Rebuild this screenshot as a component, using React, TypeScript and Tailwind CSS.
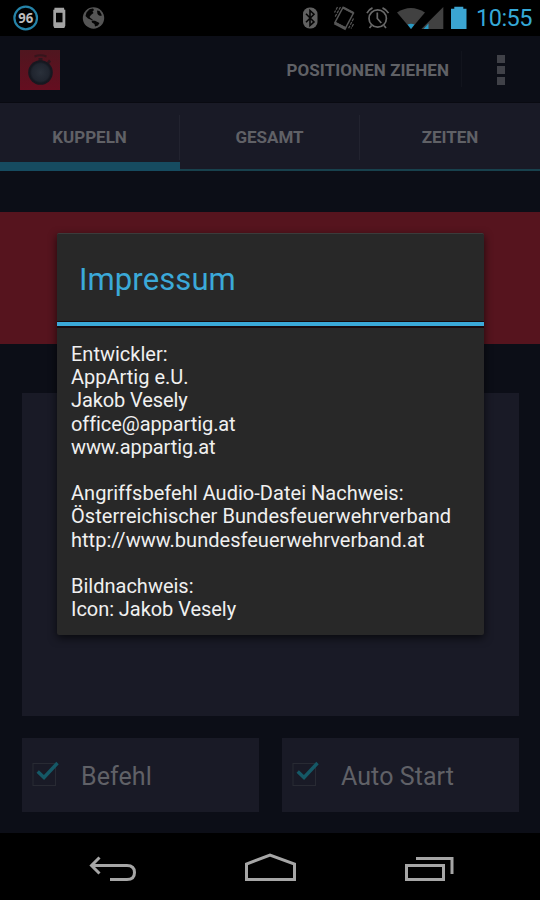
import React from "react";

function NotificationIcons() {
  return (
    <div className="flex h-full w-28 items-center">
      <svg width="112" height="36" viewBox="0 0 112 36" fill="none">
        <circle cx="25.700" cy="18" r="11.300" stroke="#2583a8" strokeWidth="2.200" />
        <text x="18.300" y="22.800" fontFamily="Open Sans" fontWeight="700" fontSize="13.500" textLength="15" lengthAdjust="spacingAndGlyphs" fill="#bdbdbd">96</text>
        <path d="M54.500 7.800h9.500l.3 2h1v16l-1 2.200H54.300l-1-2.200v-16h1z" fill="#a3a3a3" />
        <rect x="56" y="12.800" width="6.500" height="9.500" fill="#030303" />
        <circle cx="93.500" cy="18" r="10.700" fill="#555" />
        <path d="M86.500 12.500l3-3.300 3.500-.7 1 1.500-1.500 1.500 1 1.500-2.500 2-1.500 2 1.500 1.500 2 1-1.500.5-3.500-1.500-2.500-2.500zM91.500 20.500l3.500 .2 4.500 2.300-1.500 2.500-3 1-.5-2.500-2.500-1.500zM97 10.500l2.500.5 2 3.500 0 1.500-2.500-.5-1.500-1.500z" fill="#050505" />
      </svg>
    </div>
  );
}

function SystemIcons() {
  return (
    <svg width="172" height="36" viewBox="300 0 172 36" fill="none">
      <rect x="303" y="7.500" width="14.500" height="21" rx="6.500" fill="#616161" />
      <path d="M306 13.700l8 8.200-4 3.600V10.500l4 3.700-8 8" stroke="#050505" strokeWidth="1.600" />
      <g stroke="#565656" strokeWidth="1.500">
        <path d="M343 7.500L353.500 13L345.500 28L335 22.500z" />
        <path d="M343 7.500L353.500 13" strokeWidth="2.200" />
        <path d="M334.500 23L346 28.800" strokeWidth="3" />
        <path d="M340.500 7l-5.500 10M337.500 7l-3 5.500M353.500 18.500l-5 10M353.500 24l-2.500 4.500" strokeWidth="1.200" strokeDasharray="3 1" />
      </g>
      <g stroke="#686868" strokeWidth="1.700">
        <circle cx="377.700" cy="18.500" r="8.700" />
        <path d="M377.300 12.500v6l4 4.500M367 13.200q1.500-3.500 5.500-5.300M382.500 7.900q4 1.800 6 5.300M371.500 25.500l-2 2.500M384 25.500l2 2.500" />
      </g>
      <path d="M397 12.500Q410.800 3.500 425 12.500L411 29z" fill="#414141" />
      <path d="M407.500 24.600q3.500-1.700 7 0L411 29z" fill="#299ac4" />
      <path d="M443.300 7v22h-22z" fill="#414141" />
      <path d="M428.500 23.500V29H423.500z" fill="#299ac4" />
      <path d="M451 8.800h3.300V6.800h9v2h3.200V29H451z" fill="#3ba5d2" />
    </svg>
  );
}

function AppIcon() {
  return (
    <svg width="40" height="40" viewBox="0 0 40 40">
      <defs>
        <linearGradient id="appRed" x1="0" y1="0" x2="0" y2="1">
          <stop offset="0" stopColor="#4f161f" />
          <stop offset="1" stopColor="#650e20" />
        </linearGradient>
        <radialGradient id="dial">
          <stop offset="0" stopColor="#2a303a" />
          <stop offset="0.800" stopColor="#20252f" />
          <stop offset="1" stopColor="#14171f" />
        </radialGradient>
      </defs>
      <rect width="40" height="40" fill="url(#appRed)" />
      <path d="M14.500 6.500q6-2.500 12 0" stroke="#35151c" strokeWidth="2" fill="none" />
      <path d="M18.500 8h4v4h-4zM27 12l2-2.500 2 2-2 2.500z" fill="#2c161e" />
      <circle cx="20.500" cy="22.500" r="12.300" fill="#171820" />
      <circle cx="20.500" cy="22.500" r="10.800" fill="url(#dial)" />
    </svg>
  );
}

function Tab({ label, active = false, divider = false }: { label: string; active?: boolean; divider?: boolean }) {
  return (
    <div className={`flex flex-1 flex-col ${active ? "border-b-[9px] border-[#164b60]" : "border-b-2 border-[#18414d]"}`}>
      <div className={`mt-3 flex h-[45px] shrink-0 items-center justify-center text-[17px] font-bold text-[#606166] ${divider ? "border-r border-[#22232f]" : ""}`}>
        <span className="mt-px">{label}</span>
      </div>
    </div>
  );
}

function CheckCard({ label }: { label: string }) {
  return (
    <div className="flex h-[74px] flex-1 items-center bg-[#191a26] pl-[10px]">
      <svg width="30" height="30" viewBox="0 0 30 30" fill="none">
        <rect x="1" y="3.500" width="22.500" height="22" stroke="#282a33" />
        <path d="M5.700 11.500l6.300 6L25.500 3" stroke="#155866" strokeWidth="3.400" />
      </svg>
      <span className="ml-[19px] mt-[3px] text-[25px] tracking-[0.08px] text-[#606167]">{label}</span>
    </div>
  );
}

const imprint = [
  { text: "Entwickler:", tracking: "tracking-normal" },
  { text: "AppArtig e.U.", tracking: "tracking-normal" },
  { text: "Jakob Vesely", tracking: "tracking-[-0.1px]" },
  { text: "office@appartig.at", tracking: "tracking-[-0.08px]" },
  { text: "www.appartig.at", tracking: "tracking-[-0.1px]" },
  { text: "", tracking: "tracking-normal" },
  { text: "Angriffsbefehl Audio-Datei Nachweis:", tracking: "tracking-[0.03px]" },
  { text: "Österreichischer Bundesfeuerwehrverband", tracking: "tracking-[0.05px]" },
  { text: "http://www.bundesfeuerwehrverband.at", tracking: "tracking-[0.02px]" },
  { text: "", tracking: "tracking-normal" },
  { text: "Bildnachweis:", tracking: "tracking-normal" },
  { text: "Icon: Jakob Vesely", tracking: "tracking-[-0.05px]" },
];

export default function App() {
  return (
    <div className="relative flex h-[900px] w-[540px] flex-col overflow-hidden bg-[#0c0e17] font-['Roboto',sans-serif]">
      <header className="flex h-9 shrink-0 items-center bg-black">
        <NotificationIcons />
        <div className="ml-auto flex items-center">
          <SystemIcons />
          <span className="mt-[2px] w-[68px] pl-[4px] text-[23.500px] leading-none tracking-[-0.5px] text-[#35a8d7]">10:55</span>
        </div>
      </header>

      <div className="flex h-[67px] shrink-0 items-center border-b border-[#090a11] bg-[#0c0e17]">
        <div className="ml-[20px] mt-px">
          <AppIcon />
        </div>
        <div className="ml-auto flex h-9 items-center border-r border-[#12141d] pr-3 pt-[3px] text-[17px] font-bold tracking-[0.07px] text-[#606166]">
          POSITIONEN ZIEHEN
        </div>
        <div className="ml-[35px] mr-[35px] mt-[2px] flex flex-col gap-[3px]">
          <i className="h-2 w-2 bg-[#404148]" />
          <i className="h-2 w-2 bg-[#404148]" />
          <i className="h-2 w-2 bg-[#404148]" />
        </div>
      </div>

      <nav className="flex h-[68px] shrink-0 bg-[#191a26]">
        <Tab label="KUPPELN" active divider />
        <Tab label="GESAMT" divider />
        <Tab label="ZEITEN" />
      </nav>

      <main className="flex flex-1 flex-col">
        <div className="mt-[41px] h-[132px] bg-[#56141e]" />
        <div className="ml-[22px] mr-[21px] mt-[49px] h-[323px] bg-[#191a26]" />
        <div className="ml-[22px] mr-[21px] mt-[22px] flex gap-[23px]">
          <CheckCard label="Befehl" />
          <CheckCard label="Auto Start" />
        </div>
      </main>

      <footer className="h-[67px] shrink-0 bg-black">
        <svg width="540" height="67" viewBox="0 833 540 67" fill="none" stroke="#a6a6a6" strokeWidth="3">
          <path d="M99.500 857.500L91.500 865.500 99.500 873.500M91.500 865.500H127q7.500 0 7.500 7t-7.500 7h-17" />
          <path d="M246.500 879.500V864L270 855l24.500 9v15.500z" />
          <path d="M406.500 865.500h37v14h-37zM416 858.500h36V874" />
        </svg>
      </footer>

      <section className="absolute left-[57px] top-[233px] flex h-[402px] w-[427px] flex-col rounded-[2px] border-t border-[#3b3b3b] bg-[#282828] shadow-[0_3px_8px_rgba(0,0,0,0.65)]">
        <h1 className="flex h-[87px] shrink-0 items-center pl-[22px] pt-[5px] text-[31px] tracking-[0.1px] text-[#3ba9d8]">Impressum</h1>
        <div className="h-[7px] shrink-0 border-b-2 border-t border-[#180b0f] bg-[#3ba9d8]" />
        <div className="pl-[14px] pt-[15px] text-[20px] leading-[23.2px] text-[#f0f0f0]">
          {imprint.map((line, i) => (
            <p key={i} className={`h-[23.2px] whitespace-nowrap ${line.tracking}`}>{line.text}</p>
          ))}
        </div>
      </section>
    </div>
  );
}
